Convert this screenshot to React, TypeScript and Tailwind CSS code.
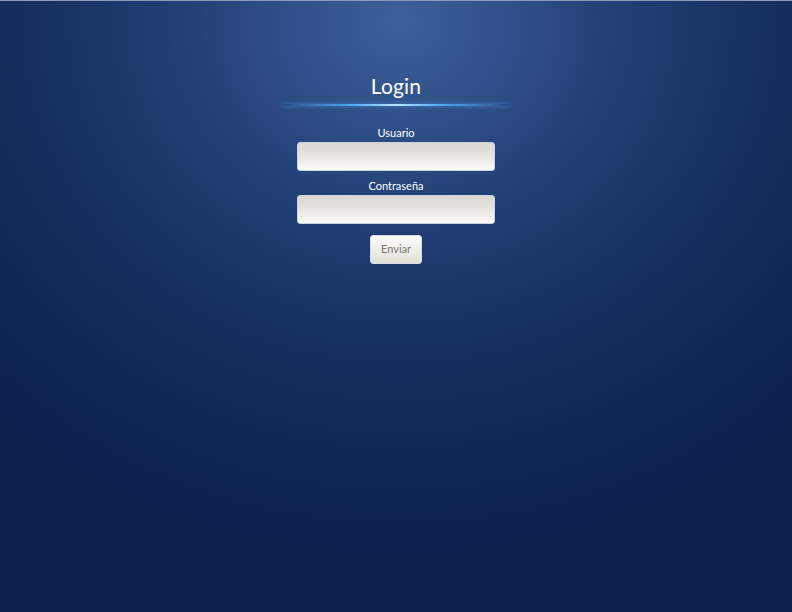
export default function App() {
  return (
    <div
      className="w-[792px] h-[612px] overflow-hidden border-t border-[#8b9bb8] bg-[radial-gradient(ellipse_620px_560px_at_400px_20px,#3d609a_0%,#2f5088_18%,#1f3d72_38%,#15305f_60%,#0f2552_82%,#0c2049_100%)] bg-[#0c2049]"
      style={{ fontFamily: 'Lato, "Open Sans", sans-serif' }}
    >
      <div className="flex flex-col items-center pt-[71px]">
        <h1 className="text-[21px] leading-[28px] text-white font-normal tracking-[0.2px]">Login</h1>
        <div className="mt-[4px] h-[2px] w-[228px] bg-[linear-gradient(90deg,rgba(80,170,240,0)_0%,#4aa8f0_30%,#b8e4ff_50%,#4aa8f0_70%,rgba(80,170,240,0)_100%)] shadow-[0_0_4px_rgba(90,180,255,0.6)]" />
        <label className="mt-[20px] text-[11px] leading-[14px] text-white">Usuario</label>
        <input
          className="mt-[2px] w-[198px] h-[29px] rounded-[3px] border border-[#c9d3e0] bg-[linear-gradient(180deg,#dbd7d1_0%,#e8e6e2_50%,#fbfbfa_100%)] outline-none"
        />
        <label className="mt-[8px] text-[11px] leading-[14px] text-white">Contraseña</label>
        <input
          type="password"
          className="mt-[2px] w-[198px] h-[29px] rounded-[3px] border border-[#c9d3e0] bg-[linear-gradient(180deg,#dbd7d1_0%,#e8e6e2_50%,#fbfbfa_100%)] outline-none"
        />
        <button className="mt-[11px] w-[52px] h-[29px] rounded-[3px] border border-[#d7dce4] bg-[linear-gradient(180deg,#fbfbfa_0%,#ecebe7_60%,#e2dfda_100%)] text-[11px] text-[#7d7a70]">
          Enviar
        </button>
      </div>
    </div>
  );
}
